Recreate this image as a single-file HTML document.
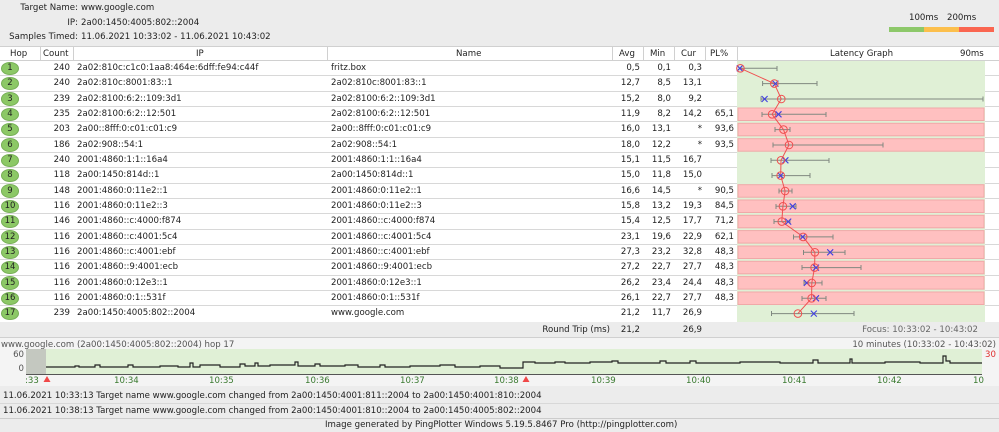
<!DOCTYPE html>
<html><head><meta charset="utf-8"><style>
*{margin:0;padding:0;box-sizing:border-box}
body{width:999px;height:432px;background:#ececec;font-family:"DejaVu Sans","Liberation Sans",sans-serif;font-size:8.6px;color:#222;position:relative;overflow:hidden}
.a{position:absolute;white-space:nowrap}
.r{text-align:right}
#hdr{position:absolute;left:0;top:46px;width:999px;height:15px;background:#fff;border-top:1px solid #d0d0d0;border-bottom:1px solid #d0d0d0}
.row{position:absolute;left:0;width:999px;height:15.33px;background:#fff;border-bottom:1px solid #d8d8d8}
.row span{position:absolute;top:2px;white-space:nowrap}
.hop{position:absolute;left:1px;top:0.5px;width:18px;height:13.5px;border-radius:50%;background:#8cc866;border:1px solid #78b058;display:flex;align-items:center;justify-content:center;font-size:8.5px;line-height:1;color:#222}
.vs{position:absolute;top:47px;width:1px;height:14px;background:#d0d0d0}
</style></head><body>
<div class="a r" style="left:0;width:78px;top:3px">Target Name:</div><div class="a" style="left:81px;top:3px">www.google.com</div>
<div class="a r" style="left:0;width:78px;top:18px">IP:</div><div class="a" style="left:81px;top:18px">2a00:1450:4005:802::2004</div>
<div class="a r" style="left:0;width:78px;top:32px">Samples Timed:</div><div class="a" style="left:81px;top:32px">11.06.2021 10:33:02 - 11.06.2021 10:43:02</div>
<div class="a" style="left:909px;top:13px">100ms</div><div class="a" style="left:947px;top:13px">200ms</div>
<div class="a" style="left:889px;top:27px;width:35px;height:5px;background:#8dc86a"></div>
<div class="a" style="left:924px;top:27px;width:35px;height:5px;background:#fcbf4c"></div>
<div class="a" style="left:959px;top:27px;width:35px;height:5px;background:#fa6650"></div>
<div id="hdr"></div>
<div class="vs" style="left:40px"></div><div class="vs" style="left:73px"></div><div class="vs" style="left:327px"></div><div class="vs" style="left:612px"></div><div class="vs" style="left:643px"></div><div class="vs" style="left:674px"></div><div class="vs" style="left:705px"></div><div class="vs" style="left:737px"></div>
<div class="a" style="left:10px;top:49px">Hop</div><div class="a" style="left:43px;top:49px">Count</div><div class="a" style="left:196px;top:49px">IP</div><div class="a" style="left:456px;top:49px">Name</div>
<div class="a" style="left:619px;top:49px">Avg</div><div class="a" style="left:650px;top:49px">Min</div><div class="a" style="left:681px;top:49px">Cur</div><div class="a" style="left:710px;top:49px">PL%</div>
<div class="a" style="left:830px;top:49px">Latency Graph</div><div class="a" style="left:960px;top:49px">90ms</div>

<div style="position:absolute;left:0;top:61px">
<div class="row" style="top:0px"><div class="hop">1</div><span class="r" style="left:40px;width:30px">240</span><span style="left:77px">2a02:810c:c1c0:1aa8:464e:6dff:fe94:c44f</span><span style="left:331px">fritz.box</span><span class="r" style="left:612px;width:28px">0,5</span><span class="r" style="left:643px;width:28px">0,1</span><span class="r" style="left:674px;width:28px">0,3</span></div>
<div class="row" style="top:15.33px"><div class="hop">2</div><span class="r" style="left:40px;width:30px">240</span><span style="left:77px">2a02:810c:8001:83::1</span><span style="left:331px">2a02:810c:8001:83::1</span><span class="r" style="left:612px;width:28px">12,7</span><span class="r" style="left:643px;width:28px">8,5</span><span class="r" style="left:674px;width:28px">13,1</span></div>
<div class="row" style="top:30.66px"><div class="hop">3</div><span class="r" style="left:40px;width:30px">239</span><span style="left:77px">2a02:8100:6:2::109:3d1</span><span style="left:331px">2a02:8100:6:2::109:3d1</span><span class="r" style="left:612px;width:28px">15,2</span><span class="r" style="left:643px;width:28px">8,0</span><span class="r" style="left:674px;width:28px">9,2</span></div>
<div class="row" style="top:46px"><div class="hop">4</div><span class="r" style="left:40px;width:30px">235</span><span style="left:77px">2a02:8100:6:2::12:501</span><span style="left:331px">2a02:8100:6:2::12:501</span><span class="r" style="left:612px;width:28px">11,9</span><span class="r" style="left:643px;width:28px">8,2</span><span class="r" style="left:674px;width:28px">14,2</span><span class="r" style="left:705px;width:29px">65,1</span></div>
<div class="row" style="top:61.33px"><div class="hop">5</div><span class="r" style="left:40px;width:30px">203</span><span style="left:77px">2a00::8fff:0:c01:c01:c9</span><span style="left:331px">2a00::8fff:0:c01:c01:c9</span><span class="r" style="left:612px;width:28px">16,0</span><span class="r" style="left:643px;width:28px">13,1</span><span class="r" style="left:674px;width:28px">*</span><span class="r" style="left:705px;width:29px">93,6</span></div>
<div class="row" style="top:76.66px"><div class="hop">6</div><span class="r" style="left:40px;width:30px">186</span><span style="left:77px">2a02:908::54:1</span><span style="left:331px">2a02:908::54:1</span><span class="r" style="left:612px;width:28px">18,0</span><span class="r" style="left:643px;width:28px">12,2</span><span class="r" style="left:674px;width:28px">*</span><span class="r" style="left:705px;width:29px">93,5</span></div>
<div class="row" style="top:92px"><div class="hop">7</div><span class="r" style="left:40px;width:30px">240</span><span style="left:77px">2001:4860:1:1::16a4</span><span style="left:331px">2001:4860:1:1::16a4</span><span class="r" style="left:612px;width:28px">15,1</span><span class="r" style="left:643px;width:28px">11,5</span><span class="r" style="left:674px;width:28px">16,7</span></div>
<div class="row" style="top:107.33px"><div class="hop">8</div><span class="r" style="left:40px;width:30px">118</span><span style="left:77px">2a00:1450:814d::1</span><span style="left:331px">2a00:1450:814d::1</span><span class="r" style="left:612px;width:28px">15,0</span><span class="r" style="left:643px;width:28px">11,8</span><span class="r" style="left:674px;width:28px">15,0</span></div>
<div class="row" style="top:122.66px"><div class="hop">9</div><span class="r" style="left:40px;width:30px">148</span><span style="left:77px">2001:4860:0:11e2::1</span><span style="left:331px">2001:4860:0:11e2::1</span><span class="r" style="left:612px;width:28px">16,6</span><span class="r" style="left:643px;width:28px">14,5</span><span class="r" style="left:674px;width:28px">*</span><span class="r" style="left:705px;width:29px">90,5</span></div>
<div class="row" style="top:138px"><div class="hop">10</div><span class="r" style="left:40px;width:30px">116</span><span style="left:77px">2001:4860:0:11e2::3</span><span style="left:331px">2001:4860:0:11e2::3</span><span class="r" style="left:612px;width:28px">15,8</span><span class="r" style="left:643px;width:28px">13,2</span><span class="r" style="left:674px;width:28px">19,3</span><span class="r" style="left:705px;width:29px">84,5</span></div>
<div class="row" style="top:153.33px"><div class="hop">11</div><span class="r" style="left:40px;width:30px">146</span><span style="left:77px">2001:4860::c:4000:f874</span><span style="left:331px">2001:4860::c:4000:f874</span><span class="r" style="left:612px;width:28px">15,4</span><span class="r" style="left:643px;width:28px">12,5</span><span class="r" style="left:674px;width:28px">17,7</span><span class="r" style="left:705px;width:29px">71,2</span></div>
<div class="row" style="top:168.66px"><div class="hop">12</div><span class="r" style="left:40px;width:30px">116</span><span style="left:77px">2001:4860::c:4001:5c4</span><span style="left:331px">2001:4860::c:4001:5c4</span><span class="r" style="left:612px;width:28px">23,1</span><span class="r" style="left:643px;width:28px">19,6</span><span class="r" style="left:674px;width:28px">22,9</span><span class="r" style="left:705px;width:29px">62,1</span></div>
<div class="row" style="top:184px"><div class="hop">13</div><span class="r" style="left:40px;width:30px">116</span><span style="left:77px">2001:4860::c:4001:ebf</span><span style="left:331px">2001:4860::c:4001:ebf</span><span class="r" style="left:612px;width:28px">27,3</span><span class="r" style="left:643px;width:28px">23,2</span><span class="r" style="left:674px;width:28px">32,8</span><span class="r" style="left:705px;width:29px">48,3</span></div>
<div class="row" style="top:199.33px"><div class="hop">14</div><span class="r" style="left:40px;width:30px">116</span><span style="left:77px">2001:4860::9:4001:ecb</span><span style="left:331px">2001:4860::9:4001:ecb</span><span class="r" style="left:612px;width:28px">27,2</span><span class="r" style="left:643px;width:28px">22,7</span><span class="r" style="left:674px;width:28px">27,7</span><span class="r" style="left:705px;width:29px">48,3</span></div>
<div class="row" style="top:214.66px"><div class="hop">15</div><span class="r" style="left:40px;width:30px">116</span><span style="left:77px">2001:4860:0:12e3::1</span><span style="left:331px">2001:4860:0:12e3::1</span><span class="r" style="left:612px;width:28px">26,2</span><span class="r" style="left:643px;width:28px">23,4</span><span class="r" style="left:674px;width:28px">24,4</span><span class="r" style="left:705px;width:29px">48,3</span></div>
<div class="row" style="top:230px"><div class="hop">16</div><span class="r" style="left:40px;width:30px">116</span><span style="left:77px">2001:4860:0:1::531f</span><span style="left:331px">2001:4860:0:1::531f</span><span class="r" style="left:612px;width:28px">26,1</span><span class="r" style="left:643px;width:28px">22,7</span><span class="r" style="left:674px;width:28px">27,7</span><span class="r" style="left:705px;width:29px">48,3</span></div>
<div class="row" style="top:245.33px;border-bottom:none"><div class="hop">17</div><span class="r" style="left:40px;width:30px">239</span><span style="left:77px">2a00:1450:4005:802::2004</span><span style="left:331px">www.google.com</span><span class="r" style="left:612px;width:28px">21,2</span><span class="r" style="left:643px;width:28px">11,7</span><span class="r" style="left:674px;width:28px">26,9</span></div>
</div>

<svg class="a" style="left:0;top:0" width="999" height="432">
<rect x="737" y="61" width="248" height="261" fill="#e0f0d6"/>
<g fill="#ffc0c0" stroke="#f0a8a8" stroke-width="1">
<rect x="738" y="108" width="246" height="12.5"/><rect x="738" y="123.3" width="246" height="12.5"/><rect x="738" y="138.7" width="246" height="12.5"/>
<rect x="738" y="184.7" width="246" height="12.5"/><rect x="738" y="200" width="246" height="12.5"/><rect x="738" y="215.3" width="246" height="12.5"/><rect x="738" y="230.6" width="246" height="12.5"/><rect x="738" y="246" width="246" height="12.5"/><rect x="738" y="261.3" width="246" height="12.5"/><rect x="738" y="276.6" width="246" height="12.5"/><rect x="738" y="292" width="246" height="12.5"/>
</g>
<g stroke="#808880" stroke-width="1" fill="none">
<path d="M739 68.3H777M777 66v5M762.6 83.6H817M762.6 81v5M817 81v5M761 99H983M761 96.5v5M983 96.5v5M762 114.3H826M762 112v5M826 112v5M775 129.6H790M775 127v5M790 127v5M773 145H883M773 142.5v5M883 142.5v5M771 160.3H829M771 158v5M829 158v5M772 175.6H810M772 173v5M810 173v5M779 191H792M779 188.5v5M792 188.5v5M776 206.3H796M776 204v5M796 204v5M774 221.6H790M774 219v5M790 219v5M793.5 236.9H833M793.5 234.5v5M833 234.5v5M803.5 252.3H845M803.5 250v5M845 250v5M802 267.6H861M802 265v5M861 265v5M804 282.9H822M804 280.5v5M822 280.5v5M802 298.3H826M802 296v5M826 296v5M771.5 313.6H854M771.5 311v5M854 311v5"/>
</g>
<polyline fill="none" stroke="#f05050" stroke-width="1" points="740.4,68.3 774.3,83.6 781.3,99 772.1,114.3 783.5,129.6 789,145 781,160.3 780.7,175.6 785.1,191 782.9,206.3 781.8,221.6 803.2,236.9 814.9,252.3 814.6,267.6 811.8,282.9 811.6,298.3 797.9,313.6"/>
<g stroke="#4040e0" stroke-width="1.1">
<path d="M736.8 65.3l6 6M742.8 65.3l-6 6M772.4 80.6l6 6M778.4 80.6l-6 6M761.6 96l6 6M767.6 96l-6 6M775.5 111.3l6 6M781.5 111.3l-6 6M782.4 157.3l6 6M788.4 157.3l-6 6M777.7 172.6l6 6M783.7 172.6l-6 6M789.7 203.3l6 6M795.7 203.3l-6 6M785.2 218.6l6 6M791.2 218.6l-6 6M799.7 233.9l6 6M805.7 233.9l-6 6M827.2 249.3l6 6M833.2 249.3l-6 6M813 264.6l6 6M819 264.6l-6 6M803.8 279.9l6 6M809.8 279.9l-6 6M813 295.3l6 6M819 295.3l-6 6M810.8 310.6l6 6M816.8 310.6l-6 6"/>
</g>
<g fill="none" stroke="#f05050" stroke-width="1">
<circle cx="740.4" cy="68.3" r="3.8"/><circle cx="774.3" cy="83.6" r="3.8"/><circle cx="781.3" cy="99" r="3.8"/><circle cx="772.1" cy="114.3" r="3.8"/><circle cx="783.5" cy="129.6" r="3.8"/><circle cx="789" cy="145" r="3.8"/><circle cx="781" cy="160.3" r="3.8"/><circle cx="780.7" cy="175.6" r="3.8"/><circle cx="785.1" cy="191" r="3.8"/><circle cx="782.9" cy="206.3" r="3.8"/><circle cx="781.8" cy="221.6" r="3.8"/><circle cx="803.2" cy="236.9" r="3.8"/><circle cx="814.9" cy="252.3" r="3.8"/><circle cx="814.6" cy="267.6" r="3.8"/><circle cx="811.8" cy="282.9" r="3.8"/><circle cx="811.6" cy="298.3" r="3.8"/><circle cx="797.9" cy="313.6" r="3.8"/>
</g>
<line x1="0" y1="337.5" x2="999" y2="337.5" stroke="#d0d0d0"/>
<rect x="0" y="338" width="999" height="48" fill="#f4f4f4"/>
<rect x="26" y="349" width="20" height="25" fill="#c4c8c0"/>
<rect x="46" y="349" width="936" height="25" fill="#e0f0d6"/>
<line x1="26" y1="374.5" x2="982" y2="374.5" stroke="#555"/>
<polyline fill="none" stroke="#222" stroke-width="1.2" points="46,367 75,367 75,366 79,366 79,367 95,367 95,365 100,365 100,367 128,367 128,365 133,365 133,367 160,367 160,366 178,366 178,367 190,367 190,363 193,363 193,367 200,367 200,365 220,365 220,367 240,367 240,364 245,364 245,366 255,366 255,363 258,363 258,366 270,366 270,365 295,365 295,362 298,362 298,366 315,366 315,364 320,364 320,366 345,366 345,365 358,365 358,367 380,367 380,365 385,365 385,367 410,367 410,366 440,366 440,365 455,365 455,367 480,367 480,366 500,366 500,368 523,368 523,362 535,362 535,363 555,363 555,362 565,362 565,363 590,363 590,362 612,362 612,361 618,361 618,363 660,363 660,361 666,361 666,363 690,363 690,361 696,361 696,363 740,363 740,362 780,362 780,363 813,363 813,360 818,360 818,363 850,363 850,359 852,359 852,363 885,363 885,362 920,362 920,363 943,363 943,356 946,356 946,361 950,361 950,363 982,363"/>
<path d="M47 370l3.5 6h-7z" fill="#f04848" transform="translate(0,6)"/>
<path d="M526 370l3.5 6h-7z" fill="#f04848" transform="translate(0,6)"/>
<rect x="0" y="386" width="999" height="46" fill="#ececec"/>
<line x1="0" y1="403.5" x2="999" y2="403.5" stroke="#d8d8d8"/>
<line x1="0" y1="418.5" x2="999" y2="418.5" stroke="#ccc"/>
</svg>
<div class="a r" style="left:400px;width:210px;top:325px">Round Trip (ms)</div>
<div class="a r" style="left:612px;width:28px;top:325px">21,2</div>
<div class="a r" style="left:674px;width:28px;top:325px">26,9</div>
<div class="a r" style="left:760px;width:218px;top:325px;color:#666">Focus: 10:33:02 - 10:43:02</div>
<div class="a" style="left:1px;top:340px;color:#555">www.google.com (2a00:1450:4005:802::2004) hop 17</div>
<div class="a r" style="left:760px;width:236px;top:340px;color:#555">10 minutes (10:33:02 - 10:43:02)</div>
<div class="a r" style="left:0;width:24px;top:350px;color:#555">60</div>
<div class="a r" style="left:0;width:24px;top:364px;color:#555">0</div>
<div class="a" style="left:985px;top:350px;color:#e03030">30</div>
<div style="color:#3a7a30">
<div class="a" style="left:25px;top:376px">:33</div>
<div class="a" style="left:114px;top:376px">10:34</div><div class="a" style="left:209px;top:376px">10:35</div><div class="a" style="left:305px;top:376px">10:36</div><div class="a" style="left:400px;top:376px">10:37</div><div class="a" style="left:494px;top:376px">10:38</div><div class="a" style="left:591px;top:376px">10:39</div><div class="a" style="left:686px;top:376px">10:40</div><div class="a" style="left:782px;top:376px">10:41</div><div class="a" style="left:877px;top:376px">10:42</div><div class="a" style="left:973px;top:376px">10</div>
</div>
<div class="a" style="left:3px;top:391px">11.06.2021 10:33:13 Target name www.google.com changed from 2a00:1450:4001:811::2004 to 2a00:1450:4001:810::2004</div>
<div class="a" style="left:3px;top:406px">11.06.2021 10:38:13 Target name www.google.com changed from 2a00:1450:4001:810::2004 to 2a00:1450:4005:802::2004</div>
<div class="a" style="left:325px;top:420px">Image generated by PingPlotter Windows 5.19.5.8467 Pro (http://pingplotter.com)</div>
</body></html>
